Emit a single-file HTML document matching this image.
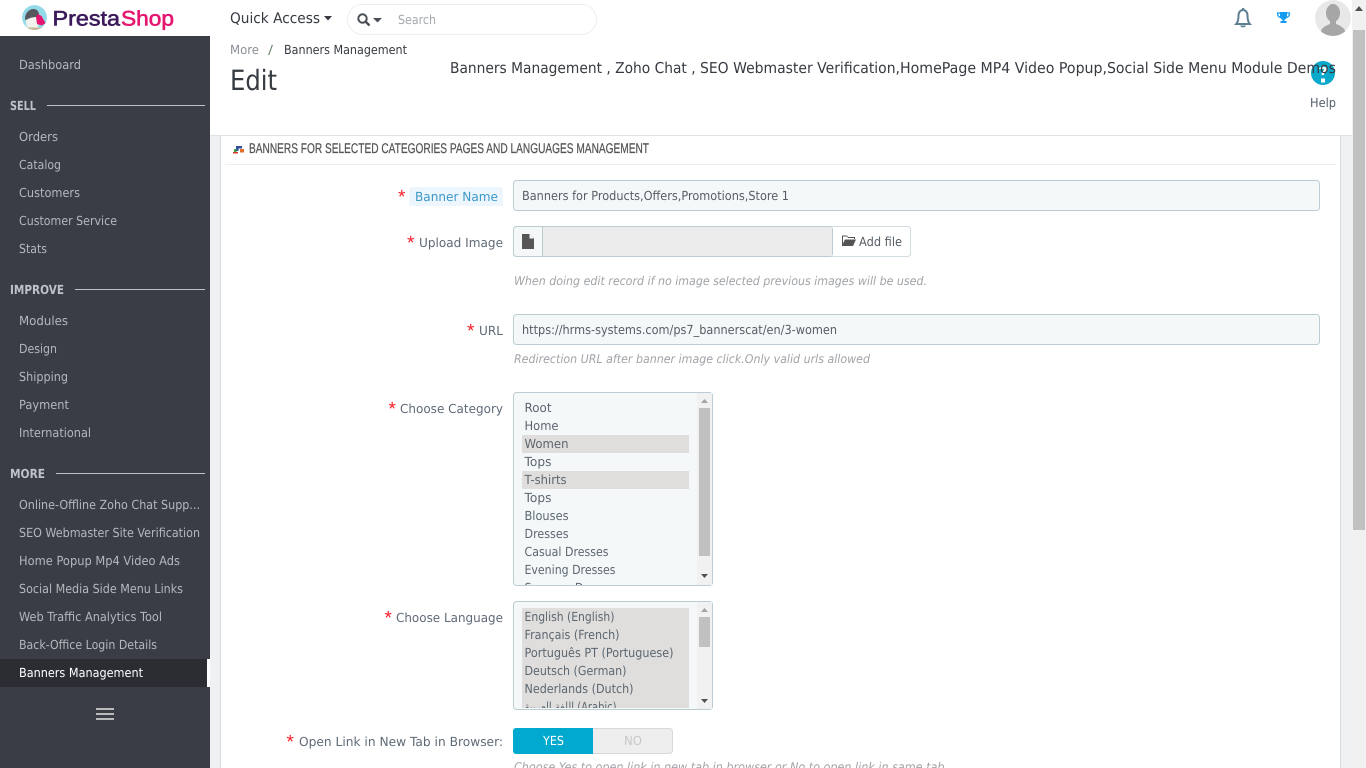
<!DOCTYPE html>
<html lang="en"><head><meta charset="utf-8"><title>Edit - Banners Management</title>
<style>
html,body{margin:0;padding:0;width:1366px;height:768px;overflow:hidden;background:#eff1f2}
svg{display:block}
text{font-family:"DejaVu Sans","Noto Sans CJK SC",sans-serif;white-space:pre;text-rendering:geometricPrecision}
.m{font-size:12.5px;fill:#b4b8bd}
.h{font-size:12.5px;font-weight:bold;fill:#bcc3c9}
.l{font-size:12.5px;fill:#5f6a77}
.v{font-size:12.5px;fill:#555d66}
.o{font-size:12.5px;fill:#5c6670}
.i{font-size:12px;font-style:italic;fill:#a0a4a8}
.s{font-family:"Liberation Sans",sans-serif;font-size:19px;fill:#f5222d}
</style></head><body>
<svg width="1366" height="768" viewBox="0 0 1366 768" xmlns="http://www.w3.org/2000/svg">
<defs>
<clipPath id="c1"><rect x="514" y="393" width="183" height="192"/></clipPath>
<clipPath id="c2"><rect x="514" y="602" width="183" height="106"/></clipPath>
<clipPath id="lg"><circle cx="34.500" cy="17.500" r="12.500"/></clipPath>
<clipPath id="av"><circle cx="1333" cy="18" r="18"/></clipPath>
</defs>
<rect width="1366" height="768" fill="#eff1f2"/>
<rect width="1352" height="135" fill="#fff"/>
<rect x="0" y="36" width="210" height="732" fill="#3a3d46"/>
<!-- panel -->
<rect x="220.500" y="135.500" width="1120" height="640" fill="#fff" stroke="#d6dadd"/>
<rect x="210" y="135" width="1142" height="1" fill="#dfe2e4"/>
<rect x="225" y="164" width="1111" height="1" fill="#eeeeee"/>
<!-- scrollbar -->
<rect x="1352" width="14" height="768" fill="#f1f1f1"/>
<rect x="1353" y="30" width="12" height="500" fill="#c1c1c1"/>
<path d="M1355 11l4-5 4 5z" fill="#505050"/>
<!-- logo -->
<g clip-path="url(#lg)">
<circle cx="34.500" cy="17.500" r="12.500" fill="#93dbe8"/>
<path d="M25 19c0-6 4-10 8.500-10 3.500 0 5.500 2.500 5.500 6l-3 3-9 4z" fill="#55585e"/>
<path d="M26 20c3-2 7-3 10-3l3 13H29c-2-3-3.500-6-3-10z" fill="#f1f2ee"/>
<path d="M38 14l3.500 2 4 7-3.500 2.500-5-1.500-1-7z" fill="#e5166f"/>
<path d="M26 27.500h16v4H26z" fill="#c2b898"/>
</g>
<text x="52.500" y="25.500" font-size="21" fill="#3c1a5b" stroke="#3c1a5b" stroke-width=".6" textLength="67.500" lengthAdjust="spacingAndGlyphs" style="font-family:'Liberation Sans',sans-serif">Presta</text>
<text x="121" y="25.500" font-size="21" fill="#e5166f" stroke="#e5166f" stroke-width=".6" textLength="53" lengthAdjust="spacingAndGlyphs" style="font-family:'Liberation Sans',sans-serif">Shop</text>
<!-- top bar -->
<text x="230" y="23" font-size="14.500" fill="#363a41" textLength="90" lengthAdjust="spacingAndGlyphs">Quick Access</text>
<path d="M324 16h8l-4 4.500z" fill="#363a41"/>
<rect x="347.500" y="4.500" width="249" height="30" rx="15" fill="#fff" stroke="#eeeeee"/>
<circle cx="362.500" cy="18.500" r="4.200" fill="none" stroke="#4a4f55" stroke-width="2"/>
<path d="M365.500 21.500l4 4" stroke="#4a4f55" stroke-width="2.400"/>
<path d="M373 18h9l-4.500 4.500z" fill="#4a4f55"/>
<text x="398" y="24" font-size="12.500" fill="#a5a9ad" textLength="38" lengthAdjust="spacingAndGlyphs">Search</text>
<!-- bell / trophy / avatar -->
<path d="M1236.200 24c1.800-2 2.300-4.500 2.300-8.500 0-3.500 2.200-5.500 4.500-5.500s4.500 2 4.500 5.500c0 4 .5 6.500 2.300 8.500z" fill="none" stroke="#5f7f93" stroke-width="2"/>
<path d="M1242 8h2.200v2.500H1242zM1240 25.500h6.200l-1.500 1.700h-3.200z" fill="#5f7f93"/>
<path d="M1280 12h7v4c0 2-1.500 3.500-2.500 3.700V21h2v2h-6v-2h2v-1.300c-1-.2-2.500-1.700-2.500-3.700z" fill="#169cf0"/>
<path d="M1280 13h-2.500c0 2.500 1 4 3 4.500M1287 13h2.500c0 2.500-1 4-3 4.500" fill="none" stroke="#169cf0" stroke-width="1.300"/>
<g clip-path="url(#av)">
<rect x="1315" width="36" height="36" fill="#e8e8e8"/>
<ellipse cx="1333" cy="13" rx="7" ry="9" fill="#a6a6a6"/>
<path d="M1320 36c0-8 5-10 10-12v-4h6v4c5 2 10 4 10 12z" fill="#a6a6a6"/>
</g>
<!-- page head -->
<text x="230" y="54" font-size="12.500" fill="#8a9096" textLength="29" lengthAdjust="spacingAndGlyphs">More</text>
<text x="268" y="54" font-size="12.500" fill="#6c8a70" textLength="5" lengthAdjust="spacingAndGlyphs">/</text>
<text x="284" y="54" font-size="12.500" fill="#363a41" textLength="123" lengthAdjust="spacingAndGlyphs">Banners Management</text>
<text x="230" y="90" font-size="28" fill="#363a41" textLength="47" lengthAdjust="spacingAndGlyphs">Edit</text>
<circle cx="1323" cy="73" r="12" fill="#0aa8cb"/>
<rect x="1321" y="78.500" width="4" height="4" fill="#fff"/>
<path d="M1319 69c0-3 8-3 8 0 0 2.500-3 2.500-3 6h-2.500c0-4 2.500-4 2.500-6" fill="#fff"/>
<text x="450" y="73" font-size="15" fill="#363a41" textLength="250" lengthAdjust="spacingAndGlyphs">Banners Management , Zoho Chat , </text>
<text x="700" y="73" font-size="15" fill="#363a41" textLength="200" lengthAdjust="spacingAndGlyphs">SEO Webmaster Verification,</text>
<text x="900" y="73" font-size="15" fill="#363a41" textLength="207" lengthAdjust="spacingAndGlyphs">HomePage MP4 Video Popup,</text>
<text x="1107" y="73" font-size="15" fill="#363a41" textLength="229" lengthAdjust="spacingAndGlyphs">Social Side Menu Module Demos</text>
<text x="1310" y="107" font-size="12.500" fill="#555f6e" textLength="26" lengthAdjust="spacingAndGlyphs">Help</text>
<!-- sidebar -->
<text class="m" x="19" y="69" textLength="62" lengthAdjust="spacingAndGlyphs">Dashboard</text>
<text class="h" x="10" y="110" textLength="26" lengthAdjust="spacingAndGlyphs">SELL</text>
<rect x="47" y="105" width="158" height="1" fill="#bcc3c9"/>
<text class="m" x="19" y="141" textLength="39" lengthAdjust="spacingAndGlyphs">Orders</text>
<text class="m" x="19" y="169" textLength="42" lengthAdjust="spacingAndGlyphs">Catalog</text>
<text class="m" x="19" y="197" textLength="61" lengthAdjust="spacingAndGlyphs">Customers</text>
<text class="m" x="19" y="225" textLength="98" lengthAdjust="spacingAndGlyphs">Customer Service</text>
<text class="m" x="19" y="253" textLength="28" lengthAdjust="spacingAndGlyphs">Stats</text>
<text class="h" x="10" y="294" textLength="54" lengthAdjust="spacingAndGlyphs">IMPROVE</text>
<rect x="75" y="289" width="130" height="1" fill="#bcc3c9"/>
<text class="m" x="19" y="325" textLength="49" lengthAdjust="spacingAndGlyphs">Modules</text>
<text class="m" x="19" y="353" textLength="38" lengthAdjust="spacingAndGlyphs">Design</text>
<text class="m" x="19" y="381" textLength="49" lengthAdjust="spacingAndGlyphs">Shipping</text>
<text class="m" x="19" y="409" textLength="50" lengthAdjust="spacingAndGlyphs">Payment</text>
<text class="m" x="19" y="437" textLength="72" lengthAdjust="spacingAndGlyphs">International</text>
<text class="h" x="10" y="478" textLength="35" lengthAdjust="spacingAndGlyphs">MORE</text>
<rect x="56" y="473" width="149" height="1" fill="#bcc3c9"/>
<text class="m" x="19" y="509" textLength="181" lengthAdjust="spacingAndGlyphs">Online-Offline Zoho Chat Supp...</text>
<text class="m" x="19" y="537" textLength="181" lengthAdjust="spacingAndGlyphs">SEO Webmaster Site Verification</text>
<text class="m" x="19" y="565" textLength="161" lengthAdjust="spacingAndGlyphs">Home Popup Mp4 Video Ads</text>
<text class="m" x="19" y="593" textLength="164" lengthAdjust="spacingAndGlyphs">Social Media Side Menu Links</text>
<text class="m" x="19" y="621" textLength="143" lengthAdjust="spacingAndGlyphs">Web Traffic Analytics Tool</text>
<text class="m" x="19" y="649" textLength="138" lengthAdjust="spacingAndGlyphs">Back-Office Login Details</text>
<rect x="0" y="659" width="207" height="28" fill="#2c2d33"/>
<rect x="207" y="659" width="3" height="28" fill="#fff"/>
<text class="m" x="19" y="677" textLength="124" lengthAdjust="spacingAndGlyphs" style="fill:#fff">Banners Management</text>
<path d="M96 708h18v2H96zM96 713h18v2H96zM96 718h18v2H96z" fill="#bbbbbb"/>
<!-- panel heading -->
<path d="M236 146h6v2.500h-3.500v2.500H236z" fill="#2f4f9a"/>
<path d="M234 149h2.500v3H234z" fill="#3aa04a"/>
<path d="M240 149h4v3.500h-4z" fill="#e2702a"/>
<path d="M233 152h5v1.500h-5z" fill="#d9342b"/>
<text x="249" y="153" font-size="14" fill="#555555" stroke="#555555" stroke-width=".25" textLength="400" lengthAdjust="spacingAndGlyphs" style="font-family:'Liberation Sans',sans-serif">BANNERS FOR SELECTED CATEGORIES PAGES AND LANGUAGES MANAGEMENT</text>
<!-- banner name -->
<text class="s" x="398" y="203">*</text>
<rect x="409" y="187" width="94" height="19" rx="2" fill="#edf6fc"/>
<text class="l" x="415" y="201" textLength="83" lengthAdjust="spacingAndGlyphs" style="fill:#3c98c9">Banner Name</text>
<rect x="513.500" y="180.500" width="806" height="30" rx="3" fill="#f5f8f9" stroke="#bbcdd2"/>
<text class="v" x="522" y="200" textLength="267" lengthAdjust="spacingAndGlyphs">Banners for Products,Offers,Promotions,Store 1</text>
<!-- upload -->
<text class="s" x="407" y="249">*</text>
<text class="l" x="419" y="247" textLength="84" lengthAdjust="spacingAndGlyphs">Upload Image</text>
<rect x="513.500" y="226.500" width="397" height="30" rx="3" fill="#fff" stroke="#d3dce0"/>
<path d="M514 230a3 3 0 0 1 3-3h25v29h-25a3 3 0 0 1-3-3z" fill="#f5f8f9"/>
<rect x="513.500" y="226.500" width="319" height="30" fill="none" stroke="#bbcdd2" rx="3"/>
<rect x="542" y="227" width="1" height="29" fill="#bbcdd2"/>
<rect x="543" y="227" width="289" height="29" fill="#ececec"/>
<path d="M522 234h7.500l4.500 4.500V249h-12z" fill="#555555"/>
<path d="M529.500 234v4.500h4.500z" fill="#f5f8f9"/>
<path d="M842 237v9h11l3-6.500h-11l-2 4v-7h4l1 1.500h6v1h1v-2h-7l-1-1.500h-5z" fill="#555555"/>
<text x="859" y="246" font-size="12.500" fill="#555d66" textLength="43" lengthAdjust="spacingAndGlyphs">Add file</text>
<text class="i" x="514" y="285" textLength="413" lengthAdjust="spacingAndGlyphs">When doing edit record if no image selected previous images will be used.</text>
<!-- URL -->
<text class="s" x="467" y="337">*</text>
<text class="l" x="479" y="335" textLength="24" lengthAdjust="spacingAndGlyphs">URL</text>
<rect x="513.500" y="314.500" width="806" height="30" rx="3" fill="#f5f8f9" stroke="#bbcdd2"/>
<text class="v" x="522" y="334" textLength="315" lengthAdjust="spacingAndGlyphs">https://hrms-systems.com/ps7_bannerscat/en/3-women</text>
<text class="i" x="514" y="363" textLength="356" lengthAdjust="spacingAndGlyphs">Redirection URL after banner image click.Only valid urls allowed</text>
<!-- category -->
<text class="s" x="388.500" y="415">*</text>
<text class="l" x="400" y="413" textLength="103" lengthAdjust="spacingAndGlyphs">Choose Category</text>
<rect x="513.500" y="392.500" width="199" height="193" rx="3" fill="#f5f8f9" stroke="#bbcdd2"/>
<rect x="697" y="393" width="15" height="192" fill="#f1f1f1"/>
<rect x="699" y="408" width="11" height="148" fill="#c1c1c1"/>
<path d="M701 403l3.500-4 3.500 4z" fill="#a3a3a3"/><path d="M701 574h7l-3.500 4z" fill="#505050"/>
<g clip-path="url(#c1)">
<rect x="522" y="435" width="167" height="18" fill="#dfdedc"/>
<rect x="522" y="471" width="167" height="18" fill="#dfdedc"/>
<text class="o" x="524.500" y="412" textLength="27" lengthAdjust="spacingAndGlyphs">Root</text>
<text class="o" x="524.500" y="430" textLength="34" lengthAdjust="spacingAndGlyphs">Home</text>
<text class="o" x="524.500" y="448" textLength="44" lengthAdjust="spacingAndGlyphs">Women</text>
<text class="o" x="524.500" y="466" textLength="27" lengthAdjust="spacingAndGlyphs">Tops</text>
<text class="o" x="524.500" y="484" textLength="42" lengthAdjust="spacingAndGlyphs">T-shirts</text>
<text class="o" x="524.500" y="502" textLength="27" lengthAdjust="spacingAndGlyphs">Tops</text>
<text class="o" x="524.500" y="520" textLength="44" lengthAdjust="spacingAndGlyphs">Blouses</text>
<text class="o" x="524.500" y="538" textLength="44" lengthAdjust="spacingAndGlyphs">Dresses</text>
<text class="o" x="524.500" y="556" textLength="84" lengthAdjust="spacingAndGlyphs">Casual Dresses</text>
<text class="o" x="524.500" y="574" textLength="91" lengthAdjust="spacingAndGlyphs">Evening Dresses</text>
<text class="o" x="524.500" y="592" textLength="94" lengthAdjust="spacingAndGlyphs">Summer Dresses</text>
</g>
<!-- language -->
<text class="s" x="384.500" y="624">*</text>
<text class="l" x="396" y="622" textLength="107" lengthAdjust="spacingAndGlyphs">Choose Language</text>
<rect x="513.500" y="601.500" width="199" height="108" rx="3" fill="#f5f8f9" stroke="#bbcdd2"/>
<rect x="697" y="602" width="15" height="107" fill="#f1f1f1"/>
<rect x="699" y="617" width="11" height="30" fill="#c1c1c1"/>
<path d="M701 612l3.500-4 3.500 4z" fill="#a3a3a3"/><path d="M701 699h7l-3.500 4z" fill="#505050"/>
<g clip-path="url(#c2)">
<rect x="522" y="608" width="167" height="100" fill="#dfdedc"/>
<text class="o" x="524.500" y="621" textLength="90" lengthAdjust="spacingAndGlyphs">English (English)</text>
<text class="o" x="524.500" y="639" textLength="95" lengthAdjust="spacingAndGlyphs">Français (French)</text>
<text class="o" x="524.500" y="657" textLength="149" lengthAdjust="spacingAndGlyphs">Português PT (Portuguese)</text>
<text class="o" x="524.500" y="675" textLength="102" lengthAdjust="spacingAndGlyphs">Deutsch (German)</text>
<text class="o" x="524.500" y="693" textLength="109" lengthAdjust="spacingAndGlyphs">Nederlands (Dutch)</text>
<text class="o" x="524.500" y="711" textLength="92" lengthAdjust="spacingAndGlyphs">اللغة العربية (Arabic)</text>
</g>
<!-- switch -->
<text class="s" x="286.500" y="748">*</text>
<text class="l" x="299" y="746" textLength="204" lengthAdjust="spacingAndGlyphs">Open Link in New Tab in Browser:</text>
<rect x="513.500" y="728.500" width="159" height="25" rx="3" fill="#eeeeee" stroke="#d8d8d8" stroke-width="1"/>
<path d="M516 728h77v26h-77a3 3 0 0 1-3-3v-20a3 3 0 0 1 3-3z" fill="#00a9cd"/>
<text x="543" y="745" font-size="12.500" fill="#fff" textLength="21" lengthAdjust="spacingAndGlyphs">YES</text>
<text x="624" y="745" font-size="12.500" fill="#c8c8c8" textLength="18" lengthAdjust="spacingAndGlyphs">NO</text>
<text class="i" x="514" y="771" textLength="434" lengthAdjust="spacingAndGlyphs">Choose Yes to open link in new tab in browser or No to open link in same tab.</text>
</svg>
</body></html>
